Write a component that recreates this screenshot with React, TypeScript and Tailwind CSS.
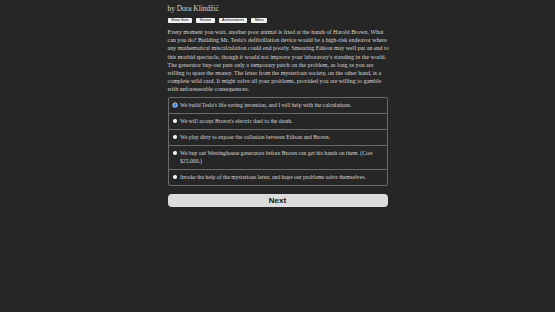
import React from 'react';

const story = [
  'Every moment you wait, another poor animal is fried at the hands of Harold Brown. What',
  "can you do? Building Mr. Tesla's defibrillation device would be a high-risk endeavor where",
  'any mathematical miscalculation could end poorly. Smearing Edison may well put an end to',
  "this morbid spectacle, though it would not improve your laboratory's standing in the world.",
  'The generator buy-out puts only a temporary patch on the problem, as long as you are',
  'willing to spare the money. The letter from the mysterious society, on the other hand, is a',
  'complete wild card. It might solve all your problems, provided you are willing to gamble',
  'with unforeseeable consequences.',
];

const choices = [
  "We build Tesla's life-saving invention, and I will help with the calculations.",
  "We will accept Brown's electric duel to the death.",
  'We play dirty to expose the collusion between Edison and Brown.',
  'We buy out Westinghouse generators before Brown can get his hands on them. (Cost $25,000.)',
  'Invoke the help of the mysterious letter, and hope our problems solve themselves.',
];

export default function App() {
  const [picked, setPicked] = React.useState(0);

  return (
    <div className="min-h-[312px] w-full bg-[#262626] text-[#d6d6d6] [font-family:'Liberation_Serif',serif]">
      <div className="mx-auto w-[220px] pt-[4px]">
        <div className="text-[7.4px] leading-[9px]">by Dora Klindžić</div>

        <div className="mt-[5px] flex gap-[4px]">
          {['Show Stats', 'Restart', 'Achievements', 'Menu'].map((b) => (
            <button
              key={b}
              className="h-[5px] rounded-[1px] bg-[#f2f2f2] px-[3.5px] text-[3.5px] leading-[5px] text-black [font-family:'Liberation_Sans',sans-serif]"
            >
              {b}
            </button>
          ))}
        </div>

        <p className="mt-[5px] text-[6px] leading-[8.2px]">
          {story.map((l) => (
            <span key={l} className="block whitespace-nowrap">
              {l}
            </span>
          ))}
        </p>

        <div className="mt-[3px] overflow-hidden rounded-[2px] border border-[#6a6a6a]">
          {choices.map((c, i) => (
            <label
              key={i}
              className={
                'flex cursor-pointer items-start gap-[3px] px-[4px] py-[3.5px] text-[5.7px] leading-[8px] ' +
                (i > 0 ? 'border-t border-[#6a6a6a]' : '')
              }
              onClick={() => setPicked(i)}
            >
              <span
                className={
                  'mt-[1.5px] h-[4.5px] w-[4.5px] shrink-0 rounded-full ' +
                  (picked === i ? 'bg-[#3b82f6] ring-[0.5px] ring-white' : 'bg-white')
                }
              />
              <span>{c}</span>
            </label>
          ))}
        </div>

        <button className="mt-[5px] h-[13px] w-full rounded-[4px] bg-[#dcdcdc] text-[8px] font-bold leading-[13px] text-[#111] [font-family:'Liberation_Sans',sans-serif]">
          Next
        </button>
      </div>
    </div>
  );
}
